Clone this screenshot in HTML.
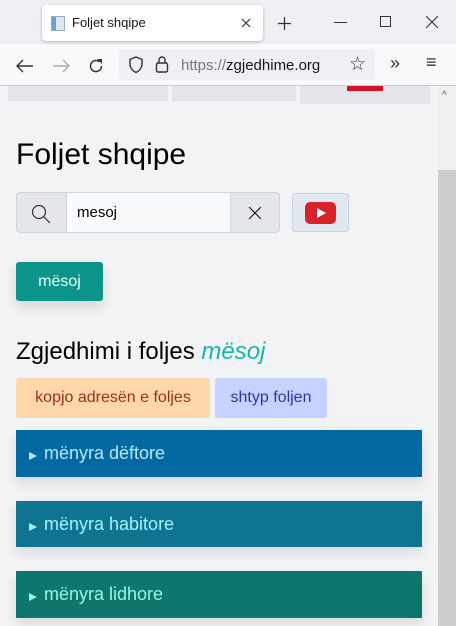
<!DOCTYPE html><html><head><style>
*{box-sizing:border-box;margin:0;padding:0}
body{width:456px;height:626px;overflow:hidden;font-family:"Liberation Sans",sans-serif;background:#f2f3f5;position:relative}
.a{position:absolute}
.tri{display:inline-block;width:0;height:0;border-left:8px solid currentColor;border-top:4.5px solid transparent;border-bottom:4.5px solid transparent;margin-right:7px;vertical-align:middle;position:relative;top:2px}
</style></head><body>
<div class="a" style="left:0;top:0;width:456px;height:44px;background:#f0f0f4"></div>
<div class="a" style="left:42px;top:5px;width:221px;height:36px;background:#fff;border-radius:4px;box-shadow:0 1px 3px rgba(0,0,0,.25)"></div>
<div class="a" style="left:51px;top:16px;width:14px;height:15px;background:#dfe6ee;border:1px solid #9ab"></div>
<div class="a" style="left:52px;top:17px;width:4px;height:13px;background:#6aa0d8"></div>
<div class="a" style="left:72px;top:15px;font-size:13px;color:#15141a">Foljet shqipe</div>
<svg class="a" style="left:241px;top:18px" width="10" height="10"><path d="M1 1l8 8M9 1L1 9" stroke="#333" stroke-width="1.2"/></svg>
<svg class="a" style="left:278px;top:17px" width="13" height="13"><path d="M6.5 0v13M0 6.5h13" stroke="#333" stroke-width="1.2"/></svg>
<div class="a" style="left:334px;top:22px;width:13px;height:1px;background:#333"></div>
<div class="a" style="left:380px;top:16px;width:11px;height:11px;border:1px solid #333"></div>
<svg class="a" style="left:426px;top:16px" width="12" height="12"><path d="M0 0l12 12M12 0L0 12" stroke="#333" stroke-width="1.1"/></svg>
<div class="a" style="left:0;top:44px;width:456px;height:42px;background:#f9f9fb;border-bottom:1px solid #ccc"></div>
<svg class="a" style="left:16px;top:59px" width="18" height="14"><path d="M17 7H2M7 1L1 7l6 6" fill="none" stroke="#333" stroke-width="1.4"/></svg>
<svg class="a" style="left:52px;top:59px" width="18" height="14"><path d="M1 7h15M11 1l6 6-6 6" fill="none" stroke="#aaa" stroke-width="1.4"/></svg>
<svg class="a" style="left:88px;top:58px" width="16" height="16"><path d="M13.5 8A5.5 5.5 0 1 1 11.5 3.8" fill="none" stroke="#333" stroke-width="1.5"/><path d="M9 1h5v5z" fill="#333"/></svg>
<div class="a" style="left:119px;top:49px;width:256px;height:31px;background:#f0f0f4;border-radius:4px"></div>
<svg class="a" style="left:128px;top:56px" width="16" height="18"><path d="M8 1L2 3.5V8c0 4 3 7 6 8.5 3-1.5 6-4.5 6-8.5V3.5z" fill="none" stroke="#333" stroke-width="1.4"/></svg>
<svg class="a" style="left:155px;top:55px" width="14" height="19"><rect x="1.5" y="8" width="11" height="9" rx="1.5" fill="none" stroke="#333" stroke-width="1.4"/><path d="M4 8V5a3 3 0 016 0v3" fill="none" stroke="#333" stroke-width="1.4"/></svg>
<div class="a" style="left:181px;top:57px;font-size:15px;color:#15141a"><span style="color:#777">https://</span>zgjedhime.org</div>
<div class="a" style="left:349px;top:53px;font-size:19px;color:#333">☆</div>
<div class="a" style="left:390px;top:53px;font-size:18px;color:#333">»</div>
<div class="a" style="left:426px;top:52px;font-size:18px;color:#333">≡</div>
<div class="a" style="left:8px;top:86px;width:160px;height:15px;background:#e4e5e8"></div>
<div class="a" style="left:172px;top:86px;width:124px;height:15px;background:#e4e5e8"></div>
<div class="a" style="left:300px;top:86px;width:130px;height:18px;background:#e4e5e8"></div>
<div class="a" style="left:347px;top:86px;width:36px;height:5px;background:#d0122d"></div>
<div class="a" style="left:438px;top:86px;width:18px;height:540px;background:#f0f0f0"></div>
<div class="a" style="left:438px;top:170px;width:18px;height:456px;background:#cdcdcd"></div>
<div class="a" style="left:442px;top:90px;font-size:10px;color:#555">^</div>
<div class="a" style="left:16px;top:138px;font-size:30px;color:#000">Foljet shqipe</div>
<div class="a" style="left:16px;top:192px;width:264px;height:41px;border:1px solid #d1d5db;border-radius:4px;background:#e5e7eb;overflow:hidden">
<div class="a" style="left:49px;top:0;width:165px;height:39px;background:#f8fafc;border-left:1px solid #d1d5db;border-right:1px solid #d1d5db"></div>
<div class="a" style="left:60px;top:11px;font-size:15px;color:#000">mesoj</div></div>
<svg class="a" style="left:30px;top:203px" width="22" height="22"><circle cx="9" cy="9" r="6.5" fill="none" stroke="#333" stroke-width="1.2"/><path d="M14 14l6 6" stroke="#333" stroke-width="1.2"/></svg>
<svg class="a" style="left:248px;top:206px" width="14" height="14"><path d="M1 1l12 12M13 1L1 13" stroke="#222" stroke-width="1.2"/></svg>
<div class="a" style="left:292px;top:193px;width:57px;height:39px;background:#e2e8f0;border:1px solid #cbd5e1;border-radius:3px"></div>
<div class="a" style="left:305px;top:202px;width:31px;height:22px;background:#d7232a;border-radius:5px"></div>
<div class="a" style="left:317px;top:208px;width:0;height:0;border-left:9px solid #fff;border-top:5px solid transparent;border-bottom:5px solid transparent"></div>
<div class="a" style="left:16px;top:262px;width:87px;height:39px;background:#0d9488;border-radius:3px;box-shadow:0 6px 12px rgba(0,0,0,.12);color:#e6fffa;font-size:16px;text-align:center;line-height:39px">mësoj</div>
<div class="a" style="left:16px;top:338px;font-size:24px;color:#000">Zgjedhimi i foljes <i style="color:#14b8a6">mësoj</i></div>
<div class="a" style="left:16px;top:378px;width:194px;height:40px;background:#fed7aa;border-radius:3px;color:#9a3412;font-size:16px;line-height:40px;text-align:center">kopjo adresën e foljes</div>
<div class="a" style="left:215px;top:378px;width:112px;height:40px;background:#c7d2fe;border-radius:3px;color:#3730a3;font-size:16px;line-height:40px;text-align:center">shtyp foljen</div>
<div class="a" style="left:16px;top:430px;width:406px;height:47px;background:#0369a1;box-shadow:0 6px 12px rgba(0,0,0,.1);color:#bae6fd;font-size:18px;line-height:47px;padding-left:13px"><span class="tri"></span>mënyra dëftore</div>
<div class="a" style="left:16px;top:501px;width:406px;height:46px;background:#0e7490;box-shadow:0 6px 12px rgba(0,0,0,.1);color:#a5f3fc;font-size:18px;line-height:46px;padding-left:13px"><span class="tri"></span>mënyra habitore</div>
<div class="a" style="left:16px;top:571px;width:406px;height:47px;background:#0f766e;box-shadow:0 6px 12px rgba(0,0,0,.1);color:#99f6e4;font-size:18px;line-height:47px;padding-left:13px"><span class="tri"></span>mënyra lidhore</div>
</body></html>
